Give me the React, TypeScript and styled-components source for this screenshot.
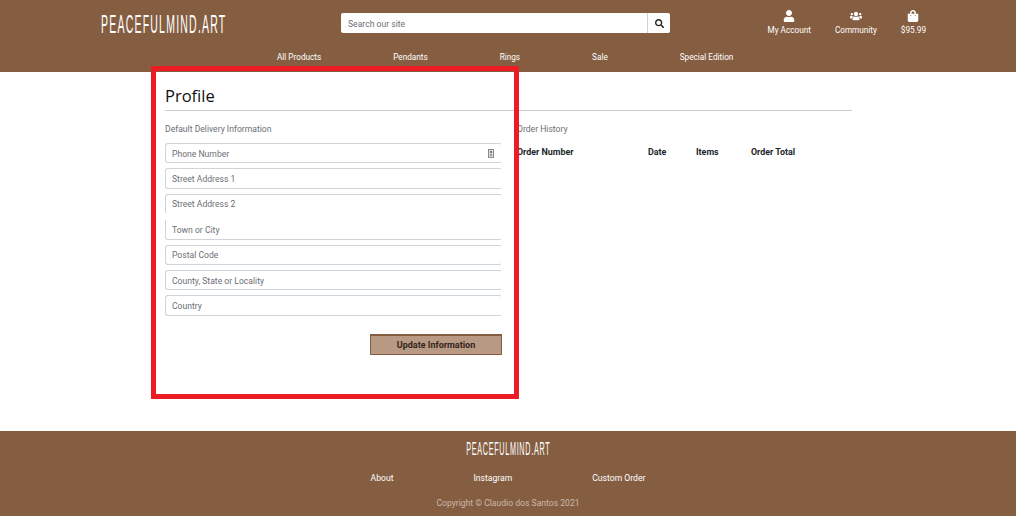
import { FC } from "react";
import styled, { createGlobalStyle } from "styled-components";
import { FaSearch, FaShoppingBag, FaUser, FaUsers } from "react-icons/fa";

const GlobalStyle = createGlobalStyle`
  html, body {
    margin: 0;
    padding: 0;
    background: #fff;
    font-family: Roboto, "Liberation Sans", sans-serif;
  }
`;

const navLinks = ["All Products", "Pendants", "Rings", "Sale", "Special Edition"];
const footerLinks = ["About", "Instagram", "Custom Order"];
const fields = [
  { label: "Phone Number", icon: true },
  { label: "Street Address 1" },
  { label: "Street Address 2", open: "bottom" },
  { label: "Town or City", open: "top" },
  { label: "Postal Code" },
  { label: "County, State or Locality" },
  { label: "Country" },
];
const columns = [
  { label: "Order Number", width: 131 },
  { label: "Date", width: 48 },
  { label: "Items", width: 55 },
  { label: "Order Total", width: 60 },
];

const App: FC = () => {
  return (
    <Page>
      <GlobalStyle />
      <Header>
        <TopRow>
          <Logo>PEACEFULMIND.ART</Logo>
          <Search>
            <SearchInput placeholder="Search our site" readOnly />
            <SearchButton>
              <FaSearch />
            </SearchButton>
          </Search>
          <Actions>
            <Action>
              <FaUser />
              <span>My Account</span>
            </Action>
            <Action>
              <FaUsers />
              <span>Community</span>
            </Action>
            <Action>
              <FaShoppingBag />
              <span>$95.99</span>
            </Action>
          </Actions>
        </TopRow>
        <Nav>
          {navLinks.map((link) => (
            <NavLink key={link}>{link}</NavLink>
          ))}
        </Nav>
      </Header>

      <Main>
        <Title>Profile</Title>
        <Columns>
          <section>
            <SectionLabel>Default Delivery Information</SectionLabel>
            <FieldList>
              {fields.map((field) => (
                <Field key={field.label} $open={field.open}>
                  <FieldInput placeholder={field.label} readOnly />
                  {field.icon && (
                    <KeyIcon viewBox="0 0 6 9">
                      <rect x="0.5" y="0.5" width="5" height="8" fill="#dcdcdc" stroke="#8a8a8a" />
                      <rect x="2" y="2" width="2" height="2" fill="#777" />
                      <rect x="2" y="5" width="2" height="2" fill="#999" />
                    </KeyIcon>
                  )}
                </Field>
              ))}
            </FieldList>
            <ButtonRow>
              <UpdateButton>Update Information</UpdateButton>
            </ButtonRow>
          </section>
          <section>
            <SectionLabel>Order History</SectionLabel>
            <OrderHead>
              {columns.map((column) => (
                <OrderCell key={column.label} $width={column.width}>
                  {column.label}
                </OrderCell>
              ))}
            </OrderHead>
          </section>
        </Columns>
      </Main>

      <Footer>
        <FooterLogo>PEACEFULMIND.ART</FooterLogo>
        <FooterLinks>
          {footerLinks.map((link) => (
            <FooterLink key={link}>{link}</FooterLink>
          ))}
        </FooterLinks>
        <Copyright>Copyright © Claudio dos Santos 2021</Copyright>
      </Footer>

      <Highlight />
    </Page>
  );
};

const Page = styled.div`
  position: relative;
  width: 1016px;
  height: 516px;
  overflow: hidden;
  display: flex;
  flex-direction: column;
`;

const Header = styled.header`
  height: 72px;
  flex: none;
  background: #855e42;
  color: #fff;
`;

const TopRow = styled.div`
  display: flex;
  align-items: flex-start;
  height: 46px;
  padding: 13px 90px 0 101px;
  box-sizing: border-box;
`;

const Logo = styled.div`
  width: 240px;
  flex: none;
  font-family: "Liberation Sans", sans-serif;
  font-size: 25px;
  line-height: 22px;
  letter-spacing: 2.9px;
  white-space: nowrap;
  color: #fff;
  transform: scaleX(0.42);
  transform-origin: left center;
`;

const Search = styled.div`
  display: flex;
  width: 329px;
  height: 20px;
  flex: none;
  background: #fff;
  border-radius: 2px;
`;

const SearchInput = styled.input`
  flex: 1;
  min-width: 0;
  border: 0;
  outline: 0;
  padding: 1px 7px 0;
  background: transparent;
  font: 8.6px Roboto, sans-serif;

  &::placeholder {
    color: #6c7075;
    opacity: 1;
  }
`;

const SearchButton = styled.div`
  width: 22px;
  display: flex;
  align-items: center;
  justify-content: center;
  border-left: 1px solid #ced4da;
  color: #212529;
  font-size: 9px;
`;

const Actions = styled.div`
  display: flex;
  gap: 24px;
  margin-left: auto;
  margin-top: -3px;
`;

const Action = styled.div`
  display: flex;
  flex-direction: column;
  align-items: center;
  gap: 3px;
  font-size: 8.2px;
  line-height: 11px;

  svg {
    height: 12px;
    width: auto;
  }
`;

const Nav = styled.nav`
  display: flex;
  justify-content: flex-start;
  gap: 72px;
  padding-left: 277px;
`;

const NavLink = styled.a`
  font-size: 8.2px;
  line-height: 23px;
  color: #fff;
`;

const Main = styled.main`
  flex: 1;
  padding: 12px 164px 0 165px;
  box-sizing: border-box;
`;

const Title = styled.h1`
  margin: 0;
  height: 26px;
  border-bottom: 1px solid #ccc;
  font-family: "Open Sans", sans-serif;
  font-size: 16.5px;
  line-height: 24px;
  font-weight: 500;
  color: #111;
`;

const Columns = styled.div`
  display: grid;
  grid-template-columns: 337px 1fr;
  column-gap: 15px;
  padding-top: 12px;
`;

const SectionLabel = styled.div`
  height: 20px;
  font-size: 8.6px;
  line-height: 12px;
  color: #6c7075;
`;

const FieldList = styled.div`
  display: flex;
  flex-direction: column;
  gap: 5px;
`;

const Field = styled.div<{ $open?: string }>`
  display: flex;
  align-items: center;
  height: 20.4px;
  box-sizing: border-box;
  padding-right: 7px;
  border: 1px solid #ced4da;
  border-right-color: transparent;
  border-radius: 3px;
  border-bottom-color: ${(p) => (p.$open === "bottom" ? "transparent" : "#ced4da")};
  border-top-color: ${(p) => (p.$open === "top" ? "transparent" : "#ced4da")};
`;

const FieldInput = styled.input`
  flex: 1;
  min-width: 0;
  border: 0;
  outline: 0;
  padding: 1px 6px 0;
  background: transparent;
  font: 8.6px Roboto, sans-serif;

  &::placeholder {
    color: #6c7075;
    opacity: 1;
  }
`;

const KeyIcon = styled.svg`
  width: 6px;
  height: 9px;
  flex: none;
`;

const ButtonRow = styled.div`
  display: flex;
  justify-content: flex-end;
  padding-top: 18px;
`;

const UpdateButton = styled.button`
  width: 132px;
  height: 21px;
  padding: 0;
  background: #b89a84;
  border: 1px solid #855e42;
  border-top-width: 2px;
  color: #33261c;
  font: 700 9px Roboto, sans-serif;
`;

const OrderHead = styled.div`
  display: flex;
  padding-top: 3px;
`;

const OrderCell = styled.div<{ $width: number }>`
  width: ${(p) => p.$width}px;
  flex: none;
  font-size: 8.9px;
  line-height: 12px;
  font-weight: 700;
  color: #212529;
`;

const Footer = styled.footer`
  height: 85px;
  flex: none;
  display: flex;
  flex-direction: column;
  align-items: center;
  background: #855e42;
  color: #fff;
`;

const FooterLogo = styled.div`
  margin-top: 8px;
  height: 20px;
  font-family: "Liberation Sans", sans-serif;
  font-size: 18px;
  line-height: 20px;
  letter-spacing: 1.8px;
  white-space: nowrap;
  transform: scaleX(0.4);
`;

const FooterLinks = styled.div`
  display: flex;
  gap: 80px;
  margin-top: 13px;
`;

const FooterLink = styled.a`
  font-size: 8.6px;
  line-height: 12px;
  color: #fff;
`;

const Copyright = styled.div`
  margin-top: 13px;
  font-size: 8.6px;
  line-height: 12px;
  color: #c9b8a8;
`;

const Highlight = styled.div`
  position: absolute;
  left: 151px;
  top: 66px;
  width: 368px;
  height: 333px;
  box-sizing: border-box;
  border: 5px solid #ed1c24;
  pointer-events: none;
`;

export default App;
